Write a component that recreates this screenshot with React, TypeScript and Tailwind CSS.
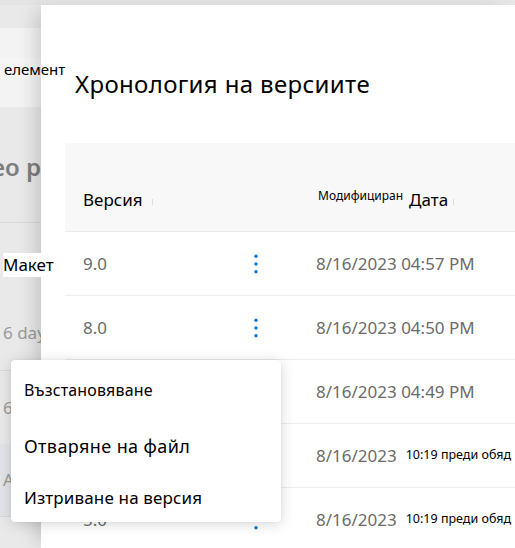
const rows = [
  { v: "9.0", date: "8/16/2023", time: "04:57 PM", am: false },
  { v: "8.0", date: "8/16/2023", time: "04:50 PM", am: false },
  { v: "7.0", date: "8/16/2023", time: "04:49 PM", am: false },
  { v: "6.0", date: "8/16/2023", time: "10:19 преди обяд", am: true },
  { v: "5.0", date: "8/16/2023", time: "10:19 преди обяд", am: true },
];

const Kebab = () => (
  <svg width="6" height="22" viewBox="0 0 6 22" className="block">
    <circle cx="3" cy="3.3" r="1.7" fill="#0b74d2" />
    <circle cx="3" cy="11" r="1.7" fill="#0b74d2" />
    <circle cx="3" cy="18.7" r="1.7" fill="#0b74d2" />
  </svg>
);

export default function App() {
  return (
    <div className="relative flex w-[515px] h-[548px] overflow-hidden bg-[#e6e6e6] font-['Noto_Sans','Liberation_Sans',sans-serif] text-black">
      {/* dimmed page behind the panel */}
      <div className="w-[41px] shrink-0 flex flex-col overflow-hidden bg-[#e9e9e9]">
        <div className="h-[5px] shrink-0 bg-[#e4e4e4]" />
        <div className="h-[23px] shrink-0" />
        <div className="h-[79px] shrink-0 bg-[#f3f3f3] pt-[30px]">
          <div className="h-[19px] bg-[#f6f6f6]" />
        </div>
        <div className="h-[115px] shrink-0 flex items-center justify-end pt-[4px] whitespace-nowrap text-[24px] font-semibold text-[#7d7d7d]">
          Видео р
        </div>
        <div className="h-[148px] shrink-0 border-t border-[#dadada] flex flex-col">
          <div className="h-[73px]" />
          <div className="h-[74px] flex items-center pl-[3px] whitespace-nowrap text-[17px] text-[#9a9a9a]">
            6 days
          </div>
        </div>
        <div className="h-[74px] shrink-0 border-t border-[#dadada] flex items-center pl-[3px] whitespace-nowrap text-[17px] text-[#9a9a9a]">
          6 days
        </div>
        <div className="h-[73px] shrink-0 bg-[#e2e4e7] border-b border-[#d6d8db] flex items-center pl-[3px] whitespace-nowrap text-[17px] text-[#9a9a9a]">
          Ab
        </div>
        <div className="flex-1" />
      </div>

      {/* version history panel */}
      <div className="flex-1 mt-[5px] bg-white shadow-[-10px_0_18px_-6px_rgba(0,0,0,0.18)] flex flex-col min-w-0">
        <h1 className="pl-[34px] pt-[63px] h-[95px] text-[24px] leading-[32px] tracking-[0.35px] font-normal whitespace-nowrap">
          Хронология на версиите
        </h1>
        <div className="ml-[24px] mt-[43px] flex flex-col">
          <div className="h-[89px] bg-[#f8f8f8] border-b border-[#ebebeb] flex items-end pb-[20px]">
            <div className="w-[171px] pl-[18px] flex items-end">
              <span className="text-[17px] leading-[22px]">Версия</span>
              <span className="ml-[9px] mb-[6px] w-px h-[6px] bg-[#dddddd]" />
            </div>
            <div className="w-[40px]" />
            <div className="pl-[42px] flex items-end whitespace-nowrap">
              <span className="text-[12px] leading-[14px] mb-[8px]">Модифициран</span>
              <span className="ml-[6px] text-[17px] leading-[22px]">Дата</span>
              <span className="ml-[5px] mb-[6px] w-px h-[6px] bg-[#dddddd]" />
            </div>
          </div>
          {rows.map((r) => (
            <div key={r.v} className="h-[64px] border-b border-[#ececec] flex items-center">
              <div className="w-[171px] pl-[18px] text-[17px] text-[#6b6b6b]">{r.v}</div>
              <div className="w-[40px] flex justify-center">
                <Kebab />
              </div>
              <div className="pl-[40px] flex items-center whitespace-nowrap text-[17px] text-[#6b6b6b]">
                {r.am ? (
                  <>
                    <span>{r.date}</span>
                    <span className="ml-[9px] text-[12.5px] text-black">{r.time}</span>
                  </>
                ) : (
                  <span>
                    {r.date} {r.time}
                  </span>
                )}
              </div>
            </div>
          ))}
        </div>
      </div>

      {/* text fragments lying over the panel edge */}
      <div className="absolute left-[4px] top-[59px] text-[15px] leading-[20px] whitespace-nowrap">
        елемент
      </div>
      <div className="absolute left-[3px] top-[253px] bg-white pr-[1px] text-[17px] leading-[24px] whitespace-nowrap">
        Макет
      </div>

      {/* context menu */}
      <div className="absolute left-[11px] top-[360px] w-[270px] h-[162px] bg-white rounded-[4px] shadow-[0_2px_14px_rgba(0,0,0,0.16),0_0_2px_rgba(0,0,0,0.08)] flex flex-col pl-[13px] pt-[18px] whitespace-nowrap">
        <div className="h-[24px] flex items-center text-[16px] tracking-[0.15px]">Възстановяване</div>
        <div className="mt-[32px] h-[24px] flex items-center text-[18px] tracking-[0.4px]">Отваряне на файл</div>
        <div className="mt-[28px] h-[24px] flex items-center text-[17px] tracking-[0.15px]">Изтриване на версия</div>
      </div>
    </div>
  );
}
